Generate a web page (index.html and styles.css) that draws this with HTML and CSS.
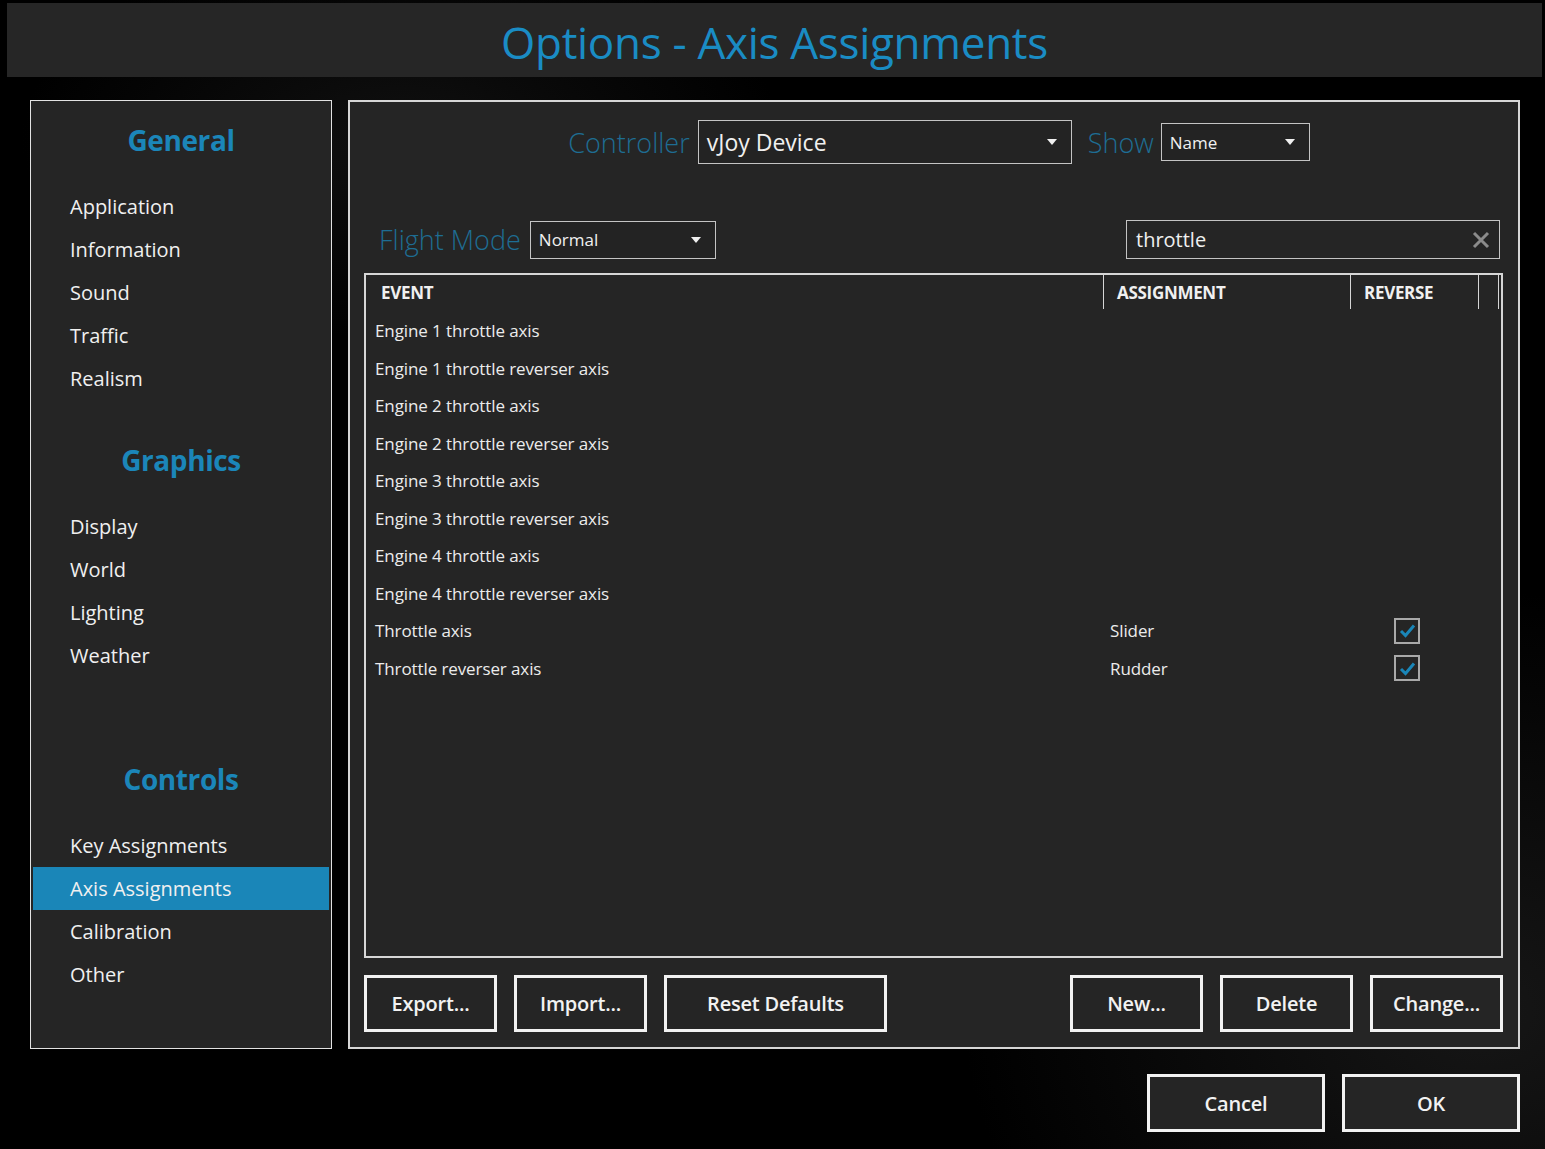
FILE: index.html
```html
<html>
    <head>
        <title>Options - Axis Assignments</title>
        <meta name="viewport" content="width=device-width" />
        <link rel="stylesheet" href="styles.css">
    </head>
    <body>
        <header class="title-bar">
            <h1>Options - Axis Assignments</h1>
        </header>

        <div class="main">
            <nav class="side">
                <div class="group group-general">
                    <h2>General</h2>
                    <ul>
                        <li>Application</li>
                        <li>Information</li>
                        <li>Sound</li>
                        <li>Traffic</li>
                        <li>Realism</li>
                    </ul>
                </div>
                <div class="group group-graphics">
                    <h2>Graphics</h2>
                    <ul>
                        <li>Display</li>
                        <li>World</li>
                        <li>Lighting</li>
                        <li>Weather</li>
                    </ul>
                </div>
                <div class="group group-controls">
                    <h2>Controls</h2>
                    <ul>
                        <li>Key Assignments</li>
                        <li class="active">Axis Assignments</li>
                        <li>Calibration</li>
                        <li>Other</li>
                    </ul>
                </div>
            </nav>

            <section class="panel">
                <div class="device-row">
                    <label class="field-label">Controller</label>
                    <div class="select select-device">
                        <span>vJoy Device</span>
                        <i class="arrow"></i>
                    </div>
                    <label class="field-label label-show">Show</label>
                    <div class="select select-show">
                        <span>Name</span>
                        <i class="arrow"></i>
                    </div>
                </div>

                <div class="filter-row">
                    <div class="mode">
                        <label class="field-label">Flight Mode</label>
                        <div class="select select-mode">
                            <span>Normal</span>
                            <i class="arrow"></i>
                        </div>
                    </div>
                    <div class="search">
                        <span>throttle</span>
                        <svg class="clear" width="18" height="18" viewBox="0 0 18 18">
                            <path d="M2 2 L16 16 M16 2 L2 16" stroke="#8b8b8b" stroke-width="3" fill="none"/>
                        </svg>
                    </div>
                </div>

                <div class="table">
                    <div class="thead">
                        <div class="th">EVENT</div>
                        <div class="th">ASSIGNMENT</div>
                        <div class="th">REVERSE</div>
                        <div class="th th-blank"></div>
                        <div class="th th-blank"></div>
                    </div>
                    <div class="tbody">
                        <div class="tr"><div>Engine 1 throttle axis</div><div></div><div></div></div>
                        <div class="tr"><div>Engine 1 throttle reverser axis</div><div></div><div></div></div>
                        <div class="tr"><div>Engine 2 throttle axis</div><div></div><div></div></div>
                        <div class="tr"><div>Engine 2 throttle reverser axis</div><div></div><div></div></div>
                        <div class="tr"><div>Engine 3 throttle axis</div><div></div><div></div></div>
                        <div class="tr"><div>Engine 3 throttle reverser axis</div><div></div><div></div></div>
                        <div class="tr"><div>Engine 4 throttle axis</div><div></div><div></div></div>
                        <div class="tr"><div>Engine 4 throttle reverser axis</div><div></div><div></div></div>
                        <div class="tr">
                            <div>Throttle axis</div>
                            <div class="assign">Slider</div>
                            <div class="rev">
                                <span class="check">
                                    <svg width="21" height="21" viewBox="0 0 21 21"><path d="M4 11 L8.5 15.5 L17 5.5" stroke="#1a86b8" stroke-width="3" fill="none"/></svg>
                                </span>
                            </div>
                        </div>
                        <div class="tr">
                            <div>Throttle reverser axis</div>
                            <div class="assign">Rudder</div>
                            <div class="rev">
                                <span class="check">
                                    <svg width="21" height="21" viewBox="0 0 21 21"><path d="M4 11 L8.5 15.5 L17 5.5" stroke="#1a86b8" stroke-width="3" fill="none"/></svg>
                                </span>
                            </div>
                        </div>
                    </div>
                </div>

                <div class="actions">
                    <div class="btn-group">
                        <button class="btn btn-sm">Export...</button>
                        <button class="btn btn-sm">Import...</button>
                        <button class="btn btn-wide">Reset Defaults</button>
                    </div>
                    <div class="btn-group">
                        <button class="btn btn-sm">New...</button>
                        <button class="btn btn-sm">Delete</button>
                        <button class="btn btn-sm">Change...</button>
                    </div>
                </div>
            </section>
        </div>

        <footer class="dialog-buttons">
            <button class="btn btn-dialog">Cancel</button>
            <button class="btn btn-dialog">OK</button>
        </footer>
    </body>
</html>
```

FILE: styles.css
```css
* {
    box-sizing: border-box;
}

html, body {
    margin: 0;
    height: 100%;
}

body {
    color: #f0f0f0;
    background: #000;
    background-image:
        radial-gradient(ellipse 520px 420px at 96% 88%, #161616 0, rgba(0,0,0,0) 100%),
        radial-gradient(ellipse 380px 200px at 26% 12%, #101010 0, rgba(0,0,0,0) 100%);
    font-family: "Open Sans", "Noto Sans", sans-serif;
    overflow: hidden;
}

.title-bar {
    margin: 3px 3px 0 7px;
    height: 74px;
    padding-top: 4px;
    background: #262626;
    display: flex;
    align-items: center;
    justify-content: center;
}

h1 {
    margin: 0;
    font-weight: 400;
    font-size: 44px;
    color: #1a8cc4;
    letter-spacing: -0.3px;
}

.main {
    display: flex;
    gap: 16px;
    margin: 23px 0 0 30px;
    height: 949px;
}

/* sidebar */
.side {
    width: 302px;
    background: #252525;
    border: 1px solid #e2e2e2;
    padding: 0 2px;
}

.side h2 {
    margin: 0 0 25px;
    height: 40px;
    line-height: 40px;
    text-align: center;
    font-size: 28px;
    font-weight: 700;
    color: #1b86b9;
    letter-spacing: -0.4px;
}

.group-general { padding-top: 19px; }
.group-graphics { padding-top: 40px; }
.group-controls { padding-top: 82px; }

.side ul {
    list-style: none;
    margin: 0;
    padding: 0;
}

.side li {
    height: 43px;
    line-height: 43px;
    padding-left: 37px;
    font-size: 20px;
}

.side li.active {
    background: #1a86b8;
}

/* main panel */
.panel {
    width: 1172px;
    background: #252525;
    border: 2px solid #d6d6d6;
    padding: 18px 15px 15px 14px;
    display: flex;
    flex-direction: column;
}

.field-label {
    font-size: 27px;
    font-weight: 300;
    color: #1e6d93;
}

.select {
    display: flex;
    align-items: center;
    justify-content: space-between;
    border: 1px solid #c4c4c4;
    background: #232323;
    padding: 0 14px 0 8px;
}

.arrow {
    width: 0;
    height: 0;
    border-left: 5px solid transparent;
    border-right: 5px solid transparent;
    border-top: 6px solid #f0f0f0;
}

.device-row {
    display: flex;
    align-items: center;
    justify-content: center;
    padding-left: 11px;
    height: 44px;
}

.select-device {
    width: 374px;
    height: 44px;
    margin: 0 16px 0 8px;
    font-size: 23px;
}

.select-show {
    width: 149px;
    height: 38px;
    margin-left: 7px;
    font-size: 17px;
}

.filter-row {
    display: flex;
    justify-content: space-between;
    align-items: center;
    margin-top: 56px;
    padding: 0 3px 0 15px;
}

.mode {
    display: flex;
    align-items: center;
    gap: 9px;
}

.select-mode {
    width: 186px;
    height: 38px;
    font-size: 17px;
}

.search {
    width: 374px;
    height: 39px;
    border: 1px solid #c4c4c4;
    display: flex;
    align-items: center;
    justify-content: space-between;
    padding: 0 9px 0 9px;
    font-size: 20px;
}

/* table */
.table {
    margin-top: 14px;
    flex: 1;
    border: 2px solid #d6d6d6;
}

.thead, .tr {
    display: grid;
    grid-template-columns: 737px 247px 128px 20px 1fr;
}

.thead {
    height: 37px;
}

.th {
    height: 34px;
    line-height: 36px;
    font-size: 17px;
    font-weight: 700;
    padding-left: 13px;
    letter-spacing: -0.3px;
}

.th:first-child {
    padding-left: 15px;
}

.th + .th {
    border-left: 1px solid #d6d6d6;
}

.tr {
    height: 37.5px;
    line-height: 37.5px;
    font-size: 17px;
    color: #ececec;
    letter-spacing: -0.1px;
}

.tr > div:first-child {
    padding-left: 9px;
}

.tr .assign {
    padding-left: 7px;
}

.tr .rev {
    display: flex;
    align-items: center;
    padding-left: 44px;
}

.check {
    width: 26px;
    height: 26px;
    border: 2px solid #a9a9a9;
    display: flex;
    align-items: center;
    justify-content: center;
}

/* buttons */
.actions {
    display: flex;
    justify-content: space-between;
    margin-top: 17px;
}

.btn-group {
    display: flex;
    gap: 17px;
}

.btn {
    height: 57px;
    background: #252525;
    border: 3px solid #f2f2f2;
    color: #f2f2f2;
    font-family: "Open Sans", "Noto Sans", sans-serif;
    font-size: 20px;
    font-weight: 600;
    letter-spacing: -0.2px;
    padding: 0;
}

.btn-sm {
    width: 133px;
}

.btn-wide {
    width: 223px;
}

.dialog-buttons {
    display: flex;
    justify-content: flex-end;
    gap: 17px;
    margin: 25px 25px 0 0;
}

.btn-dialog {
    width: 178px;
    height: 58px;
}
```
